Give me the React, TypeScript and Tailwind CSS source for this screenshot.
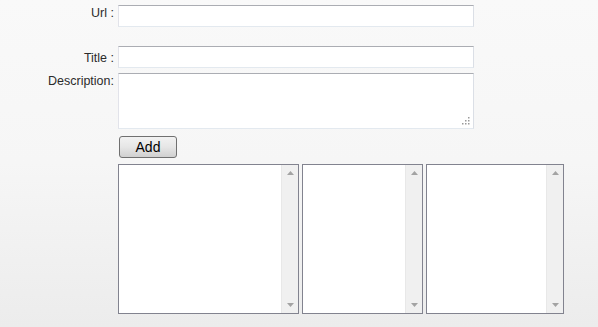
import React from 'react';

const inputBorder =
  'border border-t-[#abadb3] border-l-[#e2e3ea] border-r-[#dbdfe6] border-b-[#e3e9ef] bg-white outline-none';

function ListBox({ width }: { width: string }) {
  return (
    <div className={`relative h-[150px] ${width} border border-[#82838f] bg-white flex justify-end`}>
      {/* Scrollbar */}
      <div className="w-[17px] h-full bg-[#f0f0f0] border-l border-[#e8e8e8] flex flex-col items-center justify-between py-[6px]">
        <svg width="7" height="4" viewBox="0 0 7 4">
          <path d="M3.5 0 L7 4 L0 4 Z" fill="#a3a3a3" />
        </svg>
        <svg width="7" height="4" viewBox="0 0 7 4">
          <path d="M0 0 L7 0 L3.5 4 Z" fill="#a3a3a3" />
        </svg>
      </div>
    </div>
  );
}

export default function App() {
  return (
    <div className="min-h-[327px] w-full bg-gradient-to-b from-[#f9f9f9] via-[#f6f6f6] to-[#ececec] pt-[5px] font-['Liberation_Sans',Arial,sans-serif] text-[12.5px] leading-[14px] text-[#2b2b2b]">
      <div className="grid grid-cols-[114px_auto] gap-x-[4px] justify-items-start">
        {/* Url */}
        <label className="justify-self-end text-right pt-[1px]">Url :</label>
        <input className={`w-[356px] h-[22px] ${inputBorder}`} />

        {/* Title */}
        <label className="justify-self-end text-right mt-[19px] pt-[5px]">Title :</label>
        <input className={`w-[356px] h-[22px] mt-[19px] ${inputBorder}`} />

        {/* Description */}
        <label className="justify-self-end text-right mt-[5px] pt-[1px]">Description:</label>
        <div className="relative mt-[5px]">
          <textarea className={`block w-[356px] h-[56px] resize-none ${inputBorder}`} />
          <svg className="absolute right-[4px] bottom-[4px]" width="8" height="8" viewBox="0 0 8 8">
            <rect x="6" y="0" width="1.5" height="1.5" fill="#9a9a9a" />
            <rect x="3" y="3" width="1.5" height="1.5" fill="#9a9a9a" />
            <rect x="6" y="3" width="1.5" height="1.5" fill="#9a9a9a" />
            <rect x="0" y="6" width="1.5" height="1.5" fill="#9a9a9a" />
            <rect x="3" y="6" width="1.5" height="1.5" fill="#9a9a9a" />
            <rect x="6" y="6" width="1.5" height="1.5" fill="#9a9a9a" />
          </svg>
        </div>

        {/* Add */}
        <div />
        <button className="mt-[7px] ml-[1px] w-[58px] h-[22px] rounded-[3px] border border-[#707070] bg-gradient-to-b from-[#f2f2f2] via-[#e6e6e6] to-[#d0d0d0] text-[14px] leading-[16px] text-black font-['Liberation_Sans',Arial,sans-serif]">
          Add
        </button>

        {/* Lists */}
        <div />
        <div className="mt-[6px] flex gap-[3px]">
          <ListBox width="w-[181px]" />
          <ListBox width="w-[121px]" />
          <ListBox width="w-[138px]" />
        </div>
      </div>
    </div>
  );
}
